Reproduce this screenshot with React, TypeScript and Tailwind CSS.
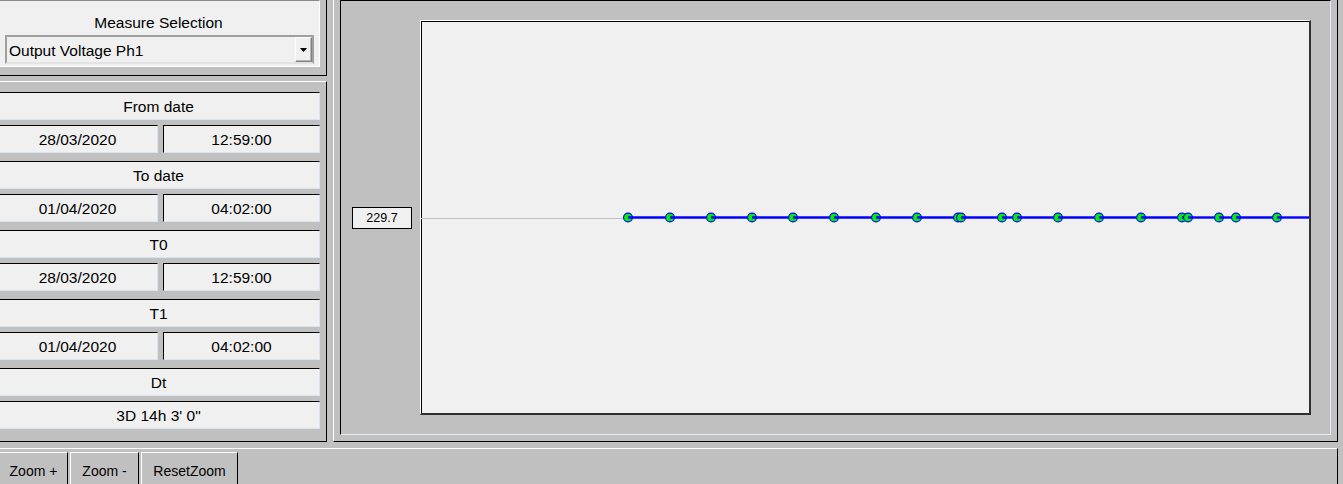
import React from 'react';

const font = "font-['Liberation_Sans',Arial,sans-serif]";

const Cell = ({ children, className = '' }: { children: React.ReactNode; className?: string }) => (
  <div
    className={`h-[28px] flex items-center justify-center pt-[2px] bg-[#f0f0f0] border border-black border-b-[#d9e4f1] border-r-[#d9e4f1] text-[15.5px] leading-[18px] text-black ${className}`}
  >
    {children}
  </div>
);

const DateBlock = ({ label, date, time }: { label: string; date: string; time: string }) => (
  <div className="flex flex-col gap-[5px]">
    <Cell>{label}</Cell>
    <div className="flex gap-[5px]">
      <Cell className="w-[161px]">{date}</Cell>
      <Cell className="flex-1">{time}</Cell>
    </div>
  </div>
);

const points = [628, 670, 711, 752, 793, 834, 876, 917, 958, 961, 1002, 1017, 1058, 1099, 1141, 1182, 1188, 1219, 1236, 1277];

const Chart = () => {
  const y = 196.5;
  const xs = points.map((p) => p - 421);
  return (
    <svg className="block w-full h-full" viewBox="0 0 888 392" preserveAspectRatio="none">
      <line x1={0} y1={197.5} x2={xs[0]} y2={197.5} stroke="#c0c0c0" strokeWidth={1} />
      {xs.map((x, i) => (
        <g key={i}>
          <circle cx={x} cy={y} r={4.4} fill="#00f000" stroke="#0000ff" strokeWidth={1.1} />
          <line x1={x} y1={y} x2={i < xs.length - 1 ? xs[i + 1] : 888} y2={y} stroke="#0000ff" strokeWidth={2.4} />
        </g>
      ))}
    </svg>
  );
};

const ToolButton = ({ children, className = '' }: { children: React.ReactNode; className?: string }) => (
  <div
    className={`h-[40px] flex justify-center pt-[9px] bg-[#c0c0c0] border-t border-l border-r border-white border-r-black text-[14px] leading-[18px] text-black ${className}`}
  >
    {children}
  </div>
);

export default function App() {
  return (
    <div className={`w-[1343px] h-[484px] overflow-hidden bg-[#c0c0c0] flex flex-col ${font}`}>
      <div className="h-[442px] flex">
        {/* left column */}
        <div className="ml-[-3px] w-[330px] flex flex-col">
          <div className="pr-[6px] pb-[8px] border-r border-b border-black">
            <div className="h-[67px] bg-[#f0f0f0] border border-[#8a8a8a] border-b-white border-r-white">
              <div className="pt-[13px] text-center text-[15.5px] leading-[18px] text-black">Measure Selection</div>
              <div className="mt-[3px] ml-[7px] mr-[5px] h-[29px] flex border-2 border-[#a0a0a0] border-b-[#e3e3e3] bg-[#f0f0f0]">
                <div className="flex-1 flex items-center pl-[2px] pt-[2px] text-[15.5px] text-black">Output Voltage Ph1</div>
                <div className="w-[17px] flex items-center justify-center bg-[#f0f0f0] border border-[#ffffff] border-b-[#808080] border-r-[#808080] shadow-[inset_-1px_-1px_0_#b8b8b8]">
                  <svg width="7" height="4" viewBox="0 0 7 4">
                    <path d="M0 0h7L3.5 4z" fill="#000" />
                  </svg>
                </div>
              </div>
            </div>
          </div>

          <div className="mt-[5px] flex-1 pt-[10px] pr-[6px] pb-[12px] border-t border-white border-r border-b border-r-black border-b-black flex flex-col gap-[8px]">
            <DateBlock label="From date" date="28/03/2020" time="12:59:00" />
            <DateBlock label="To date" date="01/04/2020" time="04:02:00" />
            <DateBlock label="T0" date="28/03/2020" time="12:59:00" />
            <DateBlock label="T1" date="01/04/2020" time="04:02:00" />
            <div className="flex flex-col gap-[5px]">
              <Cell>Dt</Cell>
              <Cell>3D 14h 3' 0"</Cell>
            </div>
          </div>
        </div>

        {/* chart group */}
        <div className="ml-[6px] w-[1005px] flex px-[6px] pb-[6px] border-l border-white border-r border-b border-r-black border-b-black">
          <div className="flex-1 flex pt-[19px] pb-[19px] pr-[19px] border border-black border-r-[#e4ecf6] border-b-[#e4ecf6]">
            <div className="w-[79px] flex items-center pl-[11px]">
              <div className="w-[60px] h-[22px] flex items-center justify-center pt-[2px] border border-black bg-[#f0f0f0] text-[12.5px] text-black">
                229.7
              </div>
            </div>
            <div className="flex-1 bg-[#f0f0f0] border-t border-l border-white border-r-2 border-b-2 border-r-[#303030] border-b-[#303030] shadow-[inset_1px_1px_0_#000]">
              <Chart />
            </div>
          </div>
        </div>
      </div>

      {/* toolbar */}
      <div className="mt-[6px] w-[1338px] flex-1 border-t border-white border-r border-r-black">
        <div className="pt-[3px] flex gap-[2px] ml-[-1px]">
          <ToolButton className="w-[69px]">Zoom +</ToolButton>
          <ToolButton className="w-[69px]">Zoom -</ToolButton>
          <ToolButton className="w-[97px]">ResetZoom</ToolButton>
        </div>
      </div>
    </div>
  );
}
